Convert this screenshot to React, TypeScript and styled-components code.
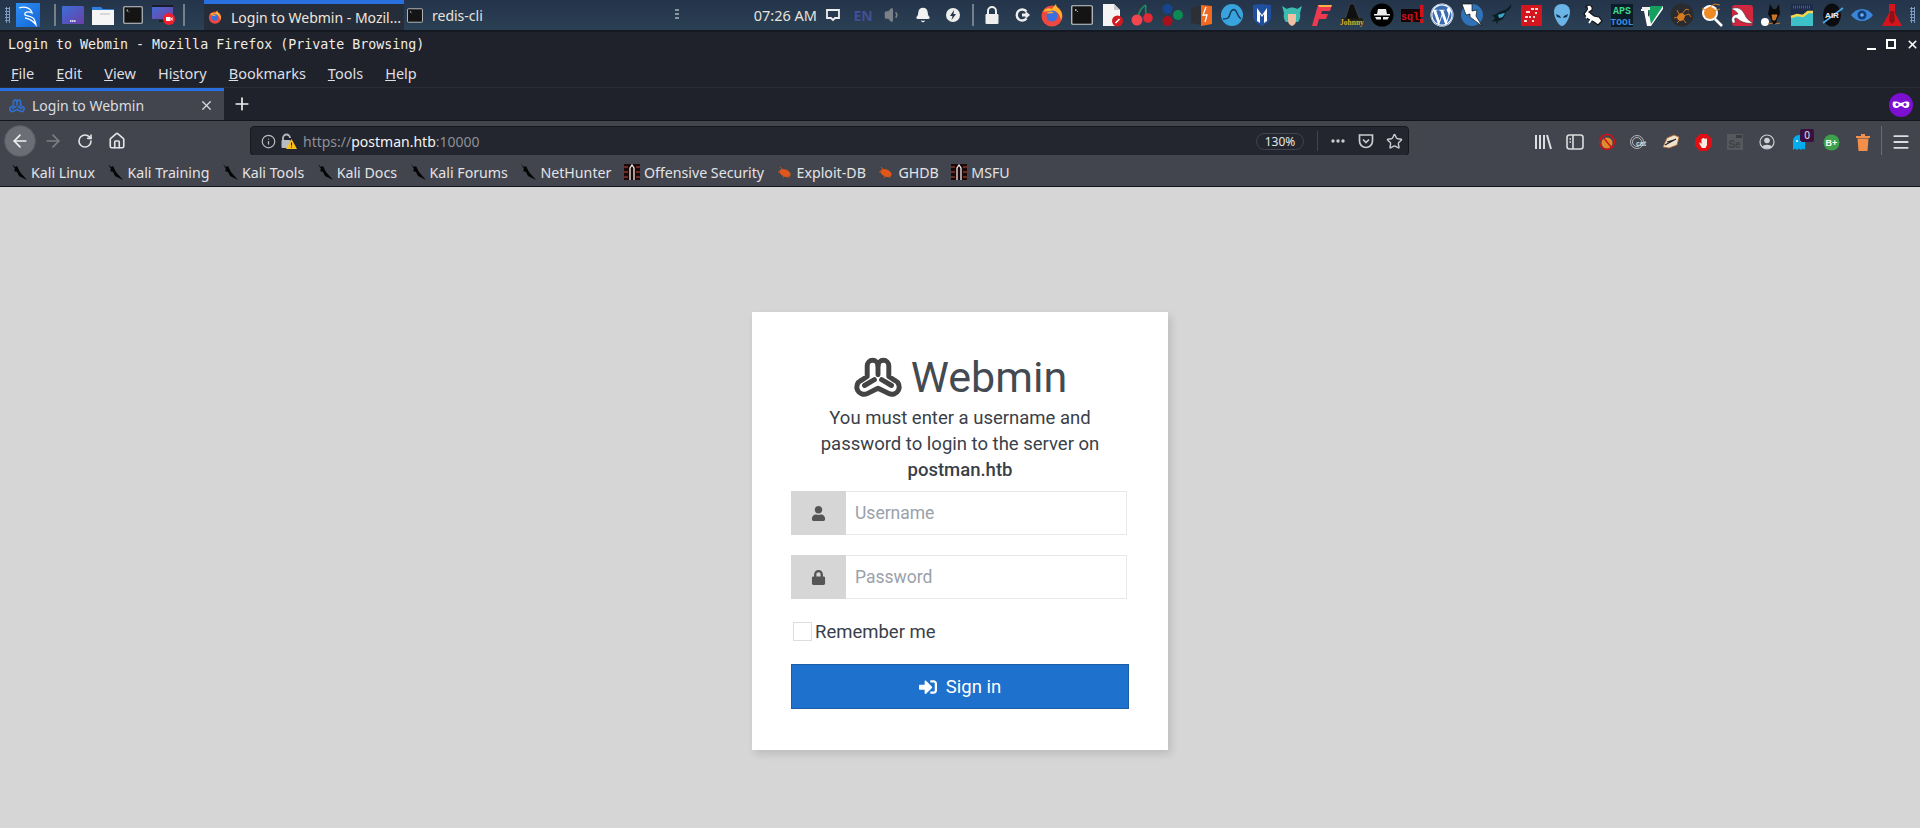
import React from 'react';
import styled, { createGlobalStyle } from 'styled-components';
import { ArrowLeft, ArrowRight, Home, Info, Menu, RotateCw, Star, Volume1, Bell, X, Plus } from 'lucide-react';
import { FaLock, FaSignInAlt, FaUser, FaWordpress } from 'react-icons/fa';

const LOGO_OUTLINE =
  'M18 25V13a6 6 0 0 1 12 0a6 6 0 0 1 12 0V25l7 4.500a7.500 7.500 0 0 1-7 14.500L30 38 18 44a7.500 7.500 0 0 1-7-14.500z';

function WebminMark({ size, color }: { size: number; color: string }) {
  return (
    <svg width={size} height={(size * 52) / 60} viewBox="0 0 60 52" fill="none" stroke={color} strokeWidth="5.500" strokeLinecap="round" strokeLinejoin="round">
      <path d={LOGO_OUTLINE} />
      <path d="M30 12v11M15 35l11-6.500M45 35l-11-6.500" />
    </svg>
  );
}

function Tile({ children, w = 24, h = 24 }: { children: React.ReactNode; w?: number; h?: number }) {
  return (
    <svg width={w} height={h} viewBox={`0 0 ${w} ${h}`}>
      {children}
    </svg>
  );
}

function FirefoxIcon({ w = 24 }: { w?: number }) {
  return (
    <svg width={w} height={w} viewBox="0 0 24 24">
      <circle cx="12" cy="13" r="10.500" fill="#f0483e" />
      <path d="M3 9C6 4 10 5 12 6c1-2 3-4 4-5 0 2 1 3 3 5 3 3 4 7 2 11-1-6-5-10-9-9-4 0-7 0-9 1z" fill="#ffb52e" />
      <circle cx="12" cy="13" r="5.500" fill="#3a6fe0" />
      <path d="M6 10c3-2 6-2 8 0-3 0-5 1-8 0z" fill="#ffa436" />
    </svg>
  );
}

function TerminalIcon({ w = 22, h = 20 }: { w?: number; h?: number }) {
  return (
    <svg width={w} height={h} viewBox="0 0 22 20">
      <rect x="0.750" y="0.750" width="20.500" height="18.500" rx="1" fill="#141414" stroke="#c9ccd0" strokeWidth="1.200" />
      <path d="M4 4h1.500v2H4zM6 6h1v1H6z" fill="#aaa" />
    </svg>
  );
}

const trayIcons: React.ReactNode[] = [
  <Tile key="lock">
    <path d="M8 12V8a4 4 0 0 1 8 0v4" fill="none" stroke="#eee" strokeWidth="2" />
    <rect x="5.500" y="11" width="13" height="10" rx="1" fill="#eee" />
  </Tile>,
  <Tile key="power">
    <path d="M16.500 8.500a5.500 5.500 0 1 0 0 7" fill="none" stroke="#eee" strokeWidth="2.400" />
    <path d="M12 10.500h3.500V8l4.500 4-4.500 4v-2.500H12z" fill="#eee" />
  </Tile>,
  <FirefoxIcon key="firefox" />,
  <TerminalIcon key="terminal" />,
  <Tile key="doc">
    <path d="M3 1h11l6 6v16H3z" fill="#f4f4f4" />
    <path d="M14 1l6 6h-6z" fill="#c9c9c9" />
    <circle cx="17.500" cy="18" r="5.500" fill="#d11a1f" />
    <path d="M15.500 20l4-4" stroke="#fff" strokeWidth="1.600" />
  </Tile>,
  <Tile key="cherry">
    <path d="M8 14C9 8 12 4 16 2M17 14c-1-3-2-7-1-11" fill="none" stroke="#1d8f5b" strokeWidth="1.600" />
    <circle cx="7" cy="17" r="5.500" fill="#ef4650" />
    <circle cx="18" cy="15" r="4.800" fill="#e02a36" />
  </Tile>,
  <Tile key="balls">
    <circle cx="7.500" cy="6" r="5" fill="#16458f" />
    <circle cx="7.500" cy="18" r="5" fill="#a8111c" />
    <circle cx="18" cy="12" r="5" fill="#0f8a53" />
  </Tile>,
  <Tile key="burp">
    <path d="M1 5l11-3v20L1 20z" fill="#2c2f36" />
    <path d="M11 2l11 1v18l-11 2z" fill="#f26a21" />
    <path d="M16 4l-3 8h4l-2 7" fill="none" stroke="#fff" strokeWidth="1.300" />
  </Tile>,
  <Tile key="shark">
    <circle cx="12" cy="12" r="11" fill="#38a3dc" />
    <path d="M3 16c5 0 6-1 7-5 1-4 3-5 5-4 2 1 2 6 6 9" fill="none" stroke="#143d5c" strokeWidth="1.500" />
  </Tile>,
  <Tile key="meta">
    <path d="M3 2l9-1 9 1v12c0 4-5 7-9 9-4-2-9-5-9-9z" fill="#1f4f9e" />
    <path d="M7 18V5l5 7 5-7v13l-3 2v-9l-2 3-2-3v9z" fill="#fff" />
  </Tile>,
  <Tile key="anime">
    <path d="M2 3l5 3c3-2 7-2 10 0l5-3-2 7c1 5-1 8-2 9H6c-1-1-3-4-2-9z" fill="#3cbcb0" />
    <path d="M8 11h8v6c0 3-1 5-4 6-3-1-4-3-4-6z" fill="#f1bfa4" />
  </Tile>,
  <Tile key="flash">
    <path d="M8 2h14l-2 6h-8l-1 3h7l-2 5h-7l-2 7H2z" fill="#ee3a4e" />
    <path d="M8 2h14l-1 2H9.500z" fill="#ffb04a" />
  </Tile>,
  <Tile key="johnny">
    <path d="M10 1h4l2 6 4 10H5l3-10z" fill="#101010" stroke="#666" strokeWidth="0.400" />
    <rect x="1" y="15" width="22" height="7" fill="#1b1a10" opacity="0.700" />
    <text x="12" y="21.500" fontFamily="Liberation Serif, serif" fontSize="7.500" fontWeight="700" fill="#e3b233" textAnchor="middle">Johnny</text>
  </Tile>,
  <Tile key="spy">
    <circle cx="12" cy="12" r="11.500" fill="#000" />
    <path d="M4 11h16v1.500H4zM7 11l1-5h8l1 5z" fill="#eee" />
    <path d="M5 14h6v2.500H6.500zM13 14h6l-1.500 2.500H13z" fill="#eee" />
  </Tile>,
  <Tile key="sql">
    <rect x="1" y="6" width="20" height="13" fill="#140406" />
    <text x="1" y="17" fontFamily="Liberation Mono, monospace" fontSize="10" fontWeight="700" fill="#d4121c">sql</text>
    <rect x="20" y="2" width="3.500" height="12" fill="#d4121c" />
    <rect x="20" y="16" width="3.500" height="4" fill="#d4121c" />
  </Tile>,
  <Tile key="wp">
    <circle cx="12" cy="12" r="11.500" fill="#fff" />
    <FaWordpress x="0.500" y="0.500" size={23} color="#3a6cb3" />
  </Tile>,
  <Tile key="bolt">
    <circle cx="12" cy="12" r="11" fill="#2f72b8" />
    <path d="M2 1h10l0 7 5-1-1 6 6 10-12-9 0-3-4 1z" fill="#fff" stroke="#111" strokeWidth="0.700" />
  </Tile>,
  <Tile key="bull">
    <path d="M21 1c1 4-2 6-5 8-1 5-4 9-8 9l-1 4-1-4-4 1 3-4-3-3c3 0 5-1 7-3 3-1 9-2 12-8z" fill="#0b1c24" />
    <path d="M8 12c2-1 5-2 7-2-1 3-3 5-6 5z" fill="#3aa4c6" />
  </Tile>,
  <Tile key="red">
    <rect x="1" y="2" width="21" height="21" rx="1" fill="#d3161d" />
    <path d="M6 9h4M11 6h3M15 6h3M15 10h2M5 14h3M9 14h2M13 14h2M4 18h3M12 18h2" stroke="#f6d9d9" strokeWidth="1.800" />
  </Tile>,
  <Tile key="alien">
    <path d="M12 1c5 0 8 3 8 8 0 6-5 14-8 14S4 15 4 9c0-5 3-8 8-8z" fill="#6ab4e6" />
    <path d="M6 11l4 2 1 2-4-1zM18 11l-4 2-1 2 4-1z" fill="#11304a" />
  </Tile>,
  <Tile key="scorpion">
    <path d="M8 2c3 0 5 2 4 5l-3 2 5 4 5 1 3 4-4 4-4-3-6-3-4-5 3-4c1-2 0-3-1-3z" fill="#fff" stroke="#111" strokeWidth="1.200" />
    <path d="M10 11l-4 4M13 14l-4 6" stroke="#fff" strokeWidth="1.800" />
  </Tile>,
  <Tile key="aps">
    <rect x="1" y="1" width="22" height="23" fill="#0c1d2a" />
    <text x="12" y="10.500" fontFamily="Liberation Mono, monospace" fontSize="10" fontWeight="700" fill="#3ed68b" textAnchor="middle">APS</text>
    <text x="12" y="21.500" fontFamily="Liberation Mono, monospace" fontSize="9.500" fontWeight="700" fill="#3a8fe0" textAnchor="middle">TOOL</text>
  </Tile>,
  <Tile key="vim">
    <path d="M1 6h7l0 8 7-11h8v3L11 23H7L4 8H1z" fill="#fff" />
    <path d="M8 6l3-3h12L11 21z" fill="#17a05d" />
    <path d="M2 4h8v3H2z" fill="#f0f0f0" />
  </Tile>,
  <Tile key="spider">
    <circle cx="12" cy="12" r="11.500" fill="#2a2b2f" />
    <ellipse cx="11" cy="14" rx="3.500" ry="4" fill="#d87a1f" transform="rotate(35 11 14)" />
    <path d="M12 11l4-5 3 1M13 13l6-2 2 3M9 11L7 7M8 14l-4 1M10 17l-3 3M13 16l3 4" fill="none" stroke="#d87a1f" strokeWidth="0.900" />
  </Tile>,
  <Tile key="bugsearch">
    <circle cx="10" cy="10" r="8" fill="#fff" />
    <circle cx="10" cy="10" r="6" fill="#ef8b24" />
    <path d="M15 16l7 7" stroke="#fff" strokeWidth="2.600" />
    <path d="M9 5L14 1l6 1M13 8l7-2M5 7L2 5" fill="none" stroke="#d87a1f" strokeWidth="1" />
  </Tile>,
  <Tile key="hook">
    <rect x="2" y="2" width="21" height="21" rx="3" fill="#d0263f" />
    <path d="M1 6c7-3 11 0 14 6 1 3 4 6 8 8-6 1-12-1-15-4-3-2-4-1-3 2 1 2-2 3-3 1-1-4 0-7 6-8-1-2-3-4-7-5z" fill="#fff" stroke="#222" strokeWidth="0.500" />
  </Tile>,
  <Tile key="dog">
    <circle cx="5" cy="19" r="4" fill="#fff" />
    <path d="M10 1l3 5h3l3-5 1 10-3 5-1 5h-4l-1-5-3-5z" fill="#0b0b0b" />
    <path d="M12 12h5l-2 5h-2zM8 21l5-1M15 21l5-1" stroke="#d07a2d" strokeWidth="1" fill="#c77422" />
  </Tile>,
  <Tile key="chart">
    <rect x="1" y="1" width="22" height="22" fill="#1d2c4a" />
    <path d="M1 14l6-2 6 1 5-4 5 0v14H1z" fill="#3dc0c8" />
    <path d="M1 14l6-2 6 1 5-4 5 0" fill="none" stroke="#f3d54e" strokeWidth="2.500" />
    <path d="M3 4h18" stroke="#556" strokeWidth="3" strokeDasharray="1 1" />
  </Tile>,
  <Tile key="air">
    <ellipse cx="12" cy="12" rx="9" ry="11.500" fill="#0c0c10" />
    <path d="M3 20L23 5" stroke="#4aa8e8" strokeWidth="1.600" />
    <text x="12" y="15" fontFamily="Liberation Sans, sans-serif" fontSize="8" fontWeight="700" fill="#e8e8e8" textAnchor="middle">AIR</text>
  </Tile>,
  <Tile key="eye">
    <path d="M1 12c6-8 16-8 22 0-6 8-16 8-22 0z" fill="#3a86d8" />
    <circle cx="12" cy="12" r="4.500" fill="#123d7a" />
    <circle cx="12" cy="12" r="1.800" fill="#6ab4f0" />
  </Tile>,
  <Tile key="rocket">
    <path d="M9 1h6v9l7 13H2l7-13z" fill="#d4151d" />
    <path d="M10 8h4l1 10-3 3-3-3z" fill="#8f1015" />
  </Tile>,
];

const bookmarks: { label: string; kind: 'kali' | 'offsec' | 'bug' }[] = [
  { label: 'Kali Linux', kind: 'kali' },
  { label: 'Kali Training', kind: 'kali' },
  { label: 'Kali Tools', kind: 'kali' },
  { label: 'Kali Docs', kind: 'kali' },
  { label: 'Kali Forums', kind: 'kali' },
  { label: 'NetHunter', kind: 'kali' },
  { label: 'Offensive Security', kind: 'offsec' },
  { label: 'Exploit-DB', kind: 'bug' },
  { label: 'GHDB', kind: 'bug' },
  { label: 'MSFU', kind: 'offsec' },
];

function BookmarkIcon({ kind }: { kind: 'kali' | 'offsec' | 'bug' }) {
  if (kind === 'kali') {
    return (
      <svg width="16" height="16" viewBox="0 0 16 16">
        <path d="M1 0l3 3 2-1 3 6 7 8-8-4-2-4-3-1 1-2z" fill="#050505" />
      </svg>
    );
  }
  if (kind === 'bug') {
    return (
      <svg width="16" height="16" viewBox="0 0 16 16">
        <ellipse cx="8" cy="9" rx="6" ry="3.500" fill="#e0561b" transform="rotate(25 8 9)" />
        <path d="M3 3l3 3M1 8l3 0M6 14l1-2M12 14l-1-3" stroke="#c4531f" strokeWidth="1" />
      </svg>
    );
  }
  return (
    <svg width="16" height="16" viewBox="0 0 16 16">
      <rect width="16" height="16" fill="#1c0808" />
      <path d="M0 3h4M0 8h4M12 3h4M12 8h4M0 13h4M12 13h4" stroke="#6a2a22" strokeWidth="2" />
      <path d="M6 16V4l2-3 2 3v12" fill="none" stroke="#eee" strokeWidth="1.300" />
    </svg>
  );
}

function MenuLabel({ text, hot }: { text: string; hot: number }) {
  return (
    <MenuItem>
      {text.slice(0, hot)}
      <u>{text[hot]}</u>
      {text.slice(hot + 1)}
    </MenuItem>
  );
}

export default function App() {
  return (
    <>
      <GlobalStyle />

      <Panel>
        <Grip />
        <KaliTile>
          <svg width="24" height="24" viewBox="0 0 24 24">
            <path d="M3 5c6-2 12 0 13 5-4-2-8-1-7 2 2 1 7 1 9 4 1 2 2 4 2 6-2-3-5-6-11-7" fill="none" stroke="#fff" strokeWidth="1.300" />
          </svg>
        </KaliTile>
        <LauncherSep />
        <Launcher>
          <svg width="22" height="18" viewBox="0 0 22 18">
            <defs>
              <linearGradient id="desk" x1="0" y1="0" x2="1" y2="1">
                <stop offset="0" stopColor="#3c6fd8" />
                <stop offset="1" stopColor="#6a3fa8" />
              </linearGradient>
            </defs>
            <rect width="22" height="18" rx="1" fill="url(#desk)" />
            <path d="M8 15h6" stroke="#fff" strokeWidth="1.400" strokeDasharray="1.500 0.500" />
          </svg>
        </Launcher>
        <Launcher>
          <svg width="22" height="20" viewBox="0 0 22 20">
            <path d="M0 2h9l2 2h11v3H0z" fill="#2f7fe0" />
            <rect y="5" width="22" height="15" fill="#f5f5f5" />
            <path d="M8 9h10" stroke="#bbb" strokeWidth="1" />
          </svg>
        </Launcher>
        <Launcher>
          <TerminalIcon w={22} h={18} />
        </Launcher>
        <Launcher>
          <svg width="23" height="20" viewBox="0 0 23 20">
            <defs>
              <linearGradient id="rec" x1="0" y1="0" x2="1" y2="1">
                <stop offset="0" stopColor="#3c6fd8" />
                <stop offset="1" stopColor="#7a3fa0" />
              </linearGradient>
            </defs>
            <rect width="21" height="14" fill="url(#rec)" />
            <rect width="21" height="2" fill="#1a1a2a" />
            <path d="M7 16h7" stroke="#222" strokeWidth="2" />
            <circle cx="17" cy="14" r="6" fill="#ef1f2d" />
            <rect x="14" y="12" width="4.500" height="4" fill="#fff" />
            <path d="M18.500 14l2-2v4z" fill="#fff" />
          </svg>
        </Launcher>
        <TaskSep />
        <TaskActive>
          <FirefoxIcon w={16} />
          <span>Login to Webmin - Mozil...</span>
        </TaskActive>
        <Task>
          <TerminalIcon w={16} h={15} />
          <span>redis-cli</span>
        </Task>

        <TrayRight>
          <MiddleGrip />
          <Clock>07:26 AM</Clock>
          <TrayStatus>
            <svg width="14" height="14" viewBox="0 0 14 14">
              <path d="M1 2h12v8H9l-2 2-2-2H1z" fill="none" stroke="#eee" strokeWidth="1.800" />
            </svg>
          </TrayStatus>
          <Lang>EN</Lang>
          <TrayStatus>
            <Volume1 size={18} color="#7a8288" fill="#7a8288" />
          </TrayStatus>
          <TrayStatus>
            <Bell size={16} color="#f2f2f2" fill="#f2f2f2" />
          </TrayStatus>
          <TrayStatus>
            <svg width="16" height="16" viewBox="0 0 16 16">
              <circle cx="8" cy="8" r="7" fill="#eee" />
              <path d="M9 3L5 9h2.500L6.500 13 11 7H8.500z" fill="#263648" />
            </svg>
          </TrayStatus>
          <TraySep />
          {trayIcons.map((icon, index) => (
            <TraySlot key={index}>{icon}</TraySlot>
          ))}
          <EndGrip />
        </TrayRight>
      </Panel>

      <TitleBar>
        <WindowTitle>Login to Webmin - Mozilla Firefox (Private Browsing)</WindowTitle>
        <WindowButtons>
          <Minimize />
          <Maximize />
          <X size={13} strokeWidth={3} color="#fff" />
        </WindowButtons>
      </TitleBar>

      <MenuBar>
        <MenuLabel text="File" hot={0} />
        <MenuLabel text="Edit" hot={0} />
        <MenuLabel text="View" hot={0} />
        <MenuLabel text="History" hot={2} />
        <MenuLabel text="Bookmarks" hot={0} />
        <MenuLabel text="Tools" hot={0} />
        <MenuLabel text="Help" hot={0} />
      </MenuBar>

      <TabStrip>
        <BrowserTab>
          <WebminMark size={18} color="#2f6fd0" />
          <TabTitle>Login to Webmin</TabTitle>
          <X size={15} color="#d8dade" />
        </BrowserTab>
        <NewTab>
          <Plus size={20} color="#f0f0f0" />
        </NewTab>
        <PrivateMask>
          <svg width="24" height="24" viewBox="0 0 24 24">
            <circle cx="12" cy="12" r="12" fill="#7c0fd0" />
            <path d="M4 9c3-1 5 0 8 1 3-1 5-2 8-1 1 3 0 6-3 6-3 0-3-2-5-2s-2 2-5 2c-3 0-4-3-3-6z" fill="#fff" />
            <circle cx="8" cy="11.500" r="1.500" fill="#7c0fd0" />
            <circle cx="16" cy="11.500" r="1.500" fill="#7c0fd0" />
          </svg>
        </PrivateMask>
      </TabStrip>

      <NavBar>
        <BackButton>
          <ArrowLeft size={20} color="#f2f2f2" />
        </BackButton>
        <NavSlot>
          <ArrowRight size={20} color="#7d7f85" />
        </NavSlot>
        <NavSlot>
          <RotateCw size={16} color="#e4e4e6" strokeWidth={2.400} />
        </NavSlot>
        <NavSlot>
          <Home size={18} color="#e4e4e6" strokeWidth={2.200} />
        </NavSlot>

        <UrlBar>
          <Info size={15} color="#b8bbc0" />
          <LockWarn>
            <svg width="18" height="18" viewBox="0 0 18 18">
              <path d="M3 9V6a3.500 3.500 0 0 1 7 0" fill="none" stroke="#b8bbc0" strokeWidth="1.800" />
              <rect x="1.500" y="8" width="9" height="8" rx="1" fill="#b8bbc0" />
              <path d="M11.500 7l5.500 10H6z" fill="#ffc21a" />
              <path d="M11.500 10.500v3M11.500 14.500v1" stroke="#222" strokeWidth="1.100" />
            </svg>
          </LockWarn>
          <UrlText>
            https://<strong>postman.htb</strong>:10000
          </UrlText>
          <ZoomPill>130%</ZoomPill>
          <UrlSep />
          <UrlActions>
            <svg width="16" height="16" viewBox="0 0 16 16">
              <circle cx="3" cy="8" r="1.700" fill="#c9cbd0" />
              <circle cx="8" cy="8" r="1.700" fill="#c9cbd0" />
              <circle cx="13" cy="8" r="1.700" fill="#c9cbd0" />
            </svg>
            <svg width="16" height="16" viewBox="0 0 16 16" fill="none" stroke="#c9cbd0" strokeWidth="1.700">
              <path d="M1.500 2h13v6a6.500 6.500 0 0 1-13 0z" />
              <path d="M5 6.500l3 3 3-3" />
            </svg>
            <Star size={17} color="#c9cbd0" strokeWidth={2} />
          </UrlActions>
        </UrlBar>

        <ToolIcons>
          <NavSlot>
            <svg width="18" height="16" viewBox="0 0 18 16">
              <path d="M2 1v14M6 1v14M10 1v14M13 1l4 14" stroke="#dcdde0" strokeWidth="2" fill="none" />
            </svg>
          </NavSlot>
          <NavSlot>
            <svg width="18" height="16" viewBox="0 0 18 16" fill="none" stroke="#dcdde0" strokeWidth="1.600">
              <rect x="1" y="1" width="16" height="14" rx="2.500" />
              <path d="M7 1v14M3.500 5H5M3.500 8H5" />
            </svg>
          </NavSlot>
          <NavSlot>
            <svg width="18" height="18" viewBox="0 0 18 18">
              <circle cx="9" cy="10" r="5.500" fill="#e08a2c" />
              <circle cx="9" cy="9" r="7.500" fill="none" stroke="#d1121c" strokeWidth="1.400" />
              <path d="M4 3l10 12" stroke="#d1121c" strokeWidth="1.400" />
            </svg>
          </NavSlot>
          <NavSlot>
            <svg width="18" height="16" viewBox="0 0 18 16">
              <circle cx="7" cy="8" r="6.500" fill="none" stroke="#d0d0d0" strokeWidth="0.800" />
              <circle cx="7" cy="8" r="4.500" fill="none" stroke="#d0d0d0" strokeWidth="0.800" />
              <text x="11" y="12" fontFamily="Liberation Sans, sans-serif" fontSize="7" fontWeight="700" fill="#d8d8d8" textAnchor="middle">cat</text>
            </svg>
          </NavSlot>
          <NavSlot>
            <svg width="18" height="16" viewBox="0 0 18 16">
              <path d="M1 13L5 4l7-3 5 2-2 8-8 3z" fill="#f0e2d0" stroke="#b06a2a" strokeWidth="0.800" />
              <path d="M3 11l11-6M5 8l7-2" stroke="#222" strokeWidth="1.300" />
            </svg>
          </NavSlot>
          <NavSlot>
            <svg width="17" height="17" viewBox="0 0 17 17">
              <path d="M5 0h7l5 5v7l-5 5H5l-5-5V5z" fill="#e10f14" />
              <path d="M4.500 8l2 2V5h1v-1h2v1h1v-.5h1.500V11l-1.500 3H7L4.500 10z" fill="#f4ece4" />
            </svg>
          </NavSlot>
          <NavSlot>
            <svg width="16" height="16" viewBox="0 0 16 16">
              <rect width="16" height="16" fill="#55585c" />
              <rect x="9" y="1" width="6" height="3" fill="#3a3c40" />
              <text x="7.500" y="14" fontFamily="Liberation Sans, sans-serif" fontSize="10" fontWeight="700" fill="#3f4246" textAnchor="middle">Se</text>
            </svg>
          </NavSlot>
          <NavSlot>
            <svg width="16" height="16" viewBox="0 0 16 16">
              <circle cx="8" cy="8" r="7" fill="none" stroke="#cfd0d3" strokeWidth="1.200" />
              <circle cx="8" cy="6.500" r="2.800" fill="#cfd0d3" />
              <path d="M3 13c1-3 9-3 10 0-3 2-7 2-10 0z" fill="#cfd0d3" />
            </svg>
          </NavSlot>
          <NavSlot>
            <svg width="14" height="17" viewBox="0 0 14 17">
              <path d="M1 16V7a6 6 0 0 1 12 0v9l-2-1.500L9 16l-2-1.500L5 16l-2-1.500z" fill="#00aef0" />
              <circle cx="5" cy="7" r="1" fill="#fff" />
              <circle cx="9" cy="7" r="1" fill="#fff" />
            </svg>
            <Badge>0</Badge>
          </NavSlot>
          <NavSlot>
            <svg width="17" height="17" viewBox="0 0 17 17">
              <circle cx="8.500" cy="8.500" r="8" fill="#3ea04c" />
              <text x="8.500" y="12" fontFamily="Liberation Sans, sans-serif" fontSize="9" fontWeight="700" fill="#fff" textAnchor="middle">B+</text>
            </svg>
          </NavSlot>
          <NavSlot>
            <svg width="14" height="18" viewBox="0 0 14 18">
              <path d="M0 3h14v2H0zM5 1h4v2H5z" fill="#f28f4a" />
              <path d="M1.500 5.500h11L11.500 18h-9z" fill="#f28f4a" />
            </svg>
          </NavSlot>
          <ToolSep />
          <NavSlot>
            <Menu size={20} color="#dcdde0" strokeWidth={2.200} />
          </NavSlot>
        </ToolIcons>
      </NavBar>

      <BookmarkBar>
        {bookmarks.map(({ label, kind }) => (
          <Bookmark key={label}>
            <BookmarkIcon kind={kind} />
            {label}
          </Bookmark>
        ))}
      </BookmarkBar>

      <Viewport>
        <LoginCard>
          <Brand>
            <WebminMark size={54} color="#444444" />
            <BrandName>Webmin</BrandName>
          </Brand>
          <Message>
            You must enter a username and
            <br />
            password to login to the server on
            <br />
            <strong>postman.htb</strong>
          </Message>
          <Fields>
            <InputGroup>
              <Addon>
                <FaUser size={15} />
              </Addon>
              <TextInput type="text" placeholder="Username" />
            </InputGroup>
            <InputGroup>
              <Addon>
                <FaLock size={15} />
              </Addon>
              <TextInput type="password" placeholder="Password" />
            </InputGroup>
          </Fields>
          <Remember>
            <CheckBox type="checkbox" />
            Remember me
          </Remember>
          <SignIn type="button">
            <FaSignInAlt size={18} />
            Sign in
          </SignIn>
        </LoginCard>
      </Viewport>
    </>
  );
}

const GlobalStyle = createGlobalStyle`
  html, body {
    margin: 0;
    padding: 0;
    height: 100%;
    overflow: hidden;
    background: #d6d6d6;
    font-family: 'Noto Sans', sans-serif;
  }

  #root {
    display: flex;
    flex-direction: column;
    height: 828px;
  }
`;

const Panel = styled.div`
  display: flex;
  align-items: center;
  flex: 0 0 32px;
  min-height: 0;
  box-sizing: border-box;
  padding-left: 5px;
  background: linear-gradient(#24344a, #2b4054);
  border-bottom: 2px solid #141820;
  color: #e6e3dc;
  font-size: 14px;
`;

const Grip = styled.i`
  width: 5px;
  height: 16px;
  margin-right: 6px;
  background-image: radial-gradient(circle, #7f9ac0 1px, transparent 1.300px);
  background-size: 3px 3px;
`;

const MiddleGrip = styled.i`
  width: 4px;
  height: 12px;
  margin-right: 75px;
  background-image: repeating-linear-gradient(#8b939b 0 2px, transparent 2px 4px);
`;

const EndGrip = styled(Grip)`
  margin: 0 5px 0 3px;
`;

const KaliTile = styled.div`
  display: flex;
  align-items: center;
  justify-content: center;
  width: 24px;
  height: 24px;
  background: linear-gradient(135deg, #2c8ef0, #1466d8);
`;

const LauncherSep = styled.i`
  flex: 0 0 2px;
  height: 22px;
  margin: 0 2px 0 14px;
  background: #77808a;
`;

const TaskSep = styled(LauncherSep)`
  margin: 0 19px 0 5px;
`;

const TraySep = styled(LauncherSep)`
  margin: 0 3px 0 4px;
`;

const Launcher = styled.div`
  display: flex;
  justify-content: center;
  width: 30px;
`;

const Task = styled.div`
  display: flex;
  align-items: center;
  gap: 9px;
  box-sizing: border-box;
  width: 200px;
  height: 30px;
  padding: 0 3px;
  white-space: nowrap;
`;

const TaskActive = styled(Task)`
  padding-left: 4px;
  background: #252c3a;
  border-top: 4px solid #2a6fe0;
  color: #f0e6d8;
`;

const TrayRight = styled.div`
  display: flex;
  align-items: center;
  margin-left: auto;
`;

const Clock = styled.span`
  margin-right: 1px;
  font-size: 14.500px;
  white-space: nowrap;
`;

const TrayStatus = styled.div`
  display: flex;
  justify-content: center;
  width: 30px;
`;

const Lang = styled(TrayStatus)`
  color: #414f96;
  font-weight: 700;
  font-size: 14px;
`;

const TraySlot = styled.div`
  display: flex;
  justify-content: center;
  align-items: center;
  width: 30px;
  height: 26px;
`;

const TitleBar = styled.div`
  display: flex;
  align-items: center;
  justify-content: space-between;
  flex: 0 0 28px;
  min-height: 0;
  padding: 0 1px 4px 8px;
  box-sizing: border-box;
  background: #1f222b;
`;

const WindowTitle = styled.span`
  color: #f0ece4;
  font-family: 'DejaVu Sans Mono', monospace;
  font-size: 13.300px;
`;

const WindowButtons = styled.div`
  display: flex;
  align-items: center;
  gap: 10px;
`;

const Minimize = styled.i`
  width: 9px;
  height: 2px;
  margin-top: 9px;
  background: #fff;
`;

const Maximize = styled.i`
  width: 6px;
  height: 6px;
  border: 2px solid #fff;
`;

const MenuBar = styled.div`
  display: flex;
  align-items: center;
  flex: 0 0 28px;
  gap: 22px;
  box-sizing: border-box;
  padding: 0 0 2px 11px;
  background: #1f222b;
  border-bottom: 1px solid #2a2d36;
`;

const MenuItem = styled.span`
  color: #dedfe3;
  font-size: 14.500px;
`;

const TabStrip = styled.div`
  display: flex;
  flex: 0 0 33px;
  min-height: 0;
  box-sizing: border-box;
  background: #1f222b;
  border-bottom: 1px solid #13151a;
`;

const BrowserTab = styled.div`
  display: flex;
  align-items: center;
  box-sizing: border-box;
  width: 224px;
  padding: 0 10px 0 8px;
  background: #42454e;
  border-top: 3px solid #2a6fe0;
`;

const TabTitle = styled.span`
  flex: 1;
  margin-left: 6px;
  color: #dcdde0;
  font-size: 14px;
`;

const NewTab = styled.div`
  display: flex;
  align-items: center;
  justify-content: center;
  width: 34px;
  margin-left: 1px;
`;

const PrivateMask = styled.div`
  display: flex;
  align-items: center;
  margin-left: auto;
  margin-right: 7px;
  padding-top: 1px;
`;

const NavBar = styled.div`
  display: flex;
  flex: 0 0 34px;
  min-height: 0;
  box-sizing: border-box;
  align-items: flex-start;
  padding: 5px 3px 0 4px;
  background: #42454e;
`;

const BackButton = styled.div`
  position: relative;
  z-index: 1;
  display: flex;
  flex: 0 0 32px;
  align-items: center;
  justify-content: center;
  height: 32px;
  margin: -1px 1px 0 0;
  background: #6b6e74;
  border: 1px solid #55585e;
  box-sizing: border-box;
  border-radius: 50%;
`;

const NavSlot = styled.div`
  position: relative;
  display: flex;
  flex: 0 0 32px;
  align-items: center;
  justify-content: center;
  height: 30px;
`;

const UrlBar = styled.div`
  display: flex;
  align-items: center;
  box-sizing: border-box;
  width: 1159px;
  height: 30px;
  margin-left: 117px;
  padding: 0 5px 0 10px;
  background: #23262f;
  border: 1px solid #16181d;
  border-radius: 4px;
`;

const LockWarn = styled.span`
  display: flex;
  margin: 0 0 0 4px;
`;

const UrlText = styled.div`
  flex: 1;
  margin-left: 5px;
  color: #8d9096;
  font-size: 14px;

  strong {
    color: #f4f4f4;
    font-weight: 400;
  }
`;

const ZoomPill = styled.span`
  display: flex;
  align-items: center;
  justify-content: center;
  width: 48px;
  height: 17px;
  box-sizing: border-box;
  border: 1px solid #42454e;
  border-radius: 9px;
  color: #e6e6e6;
  font-size: 12px;
`;

const UrlSep = styled.i`
  flex: 0 0 1px;
  height: 20px;
  margin: 0 12px 0 13px;
  background: #42454e;
`;

const UrlActions = styled.div`
  display: flex;
  align-items: center;
  gap: 12px;
`;

const ToolIcons = styled.div`
  display: flex;
  align-items: center;
  margin-left: auto;
`;

const ToolSep = styled.i`
  flex: 0 0 1px;
  height: 32px;
  margin: 0 3px 0 2px;
  background: #6a6d73;
`;

const Badge = styled.span`
  position: absolute;
  top: 2px;
  left: 17px;
  width: 14px;
  height: 13px;
  background: #3a1040;
  color: #e6e0f0;
  border-radius: 2px;
  font-size: 10px;
  line-height: 13px;
  text-align: center;
`;

const BookmarkBar = styled.div`
  display: flex;
  align-items: center;
  flex: 0 0 32px;
  min-height: 0;
  gap: 12.500px;
  box-sizing: border-box;
  padding: 3px 0 0 11px;
  background: #42454e;
  border-bottom: 1px solid #13151a;
`;

const Bookmark = styled.span`
  display: inline-flex;
  align-items: center;
  gap: 4px;
  color: #e2e3e6;
  font-size: 14.200px;
  white-space: nowrap;
`;

const Viewport = styled.main`
  display: flex;
  flex: 1;
  justify-content: center;
  align-items: flex-start;
  padding-top: 125px;
  background: #d6d6d6;
`;

const LoginCard = styled.section`
  display: flex;
  flex-direction: column;
  box-sizing: border-box;
  width: 416px;
  height: 438px;
  padding: 40px 39px 41px;
  background: #fff;
  box-shadow: 3px 4px 8px rgba(0, 0, 0, 0.12);
  font-family: Roboto, sans-serif;
  color: #3a4049;
`;

const Brand = styled.div`
  display: flex;
  align-items: center;
  justify-content: center;
  gap: 6px;
  height: 50px;
  padding-right: 2px;
`;

const BrandName = styled.span`
  color: #444a52;
  font-size: 43px;
  font-weight: 400;
`;

const Message = styled.p`
  margin: 3px 0 0;
  font-size: 18.500px;
  line-height: 26px;
  text-align: center;

  strong {
    font-weight: 500;
  }
`;

const Fields = styled.div`
  display: flex;
  flex-direction: column;
  gap: 20px;
  margin-top: 8px;
`;

const InputGroup = styled.div`
  display: flex;
  width: 336px;
  height: 44px;
`;

const Addon = styled.span`
  display: flex;
  flex: 0 0 55px;
  align-items: center;
  justify-content: center;
  background: #d6d6d6;
  color: #555;
`;

const TextInput = styled.input`
  flex: 1;
  min-width: 0;
  box-sizing: border-box;
  padding: 0 9px;
  border: 1px solid #e8e8e8;
  border-left: none;
  outline: none;
  font-family: Roboto, sans-serif;
  font-size: 17.500px;

  &::placeholder {
    color: #9aa1aa;
    opacity: 1;
  }
`;

const Remember = styled.label`
  display: flex;
  align-items: center;
  gap: 3px;
  box-sizing: border-box;
  height: 20px;
  margin-top: 22px;
  padding: 2px 0 0 2px;
  font-size: 18.500px;
`;

const CheckBox = styled.input`
  appearance: none;
  width: 19px;
  height: 19px;
  margin: -1px 0 0;
  border: 1px solid #ddd;
  background: #fff;
`;

const SignIn = styled.button`
  display: flex;
  flex: 0 0 45px;
  align-items: center;
  justify-content: center;
  gap: 9px;
  width: 338px;
  margin-top: 23px;
  background: #1e71cc;
  border: 1px solid #1a5ea8;
  color: #fff;
  font-family: Roboto, sans-serif;
  font-size: 18.500px;
`;
